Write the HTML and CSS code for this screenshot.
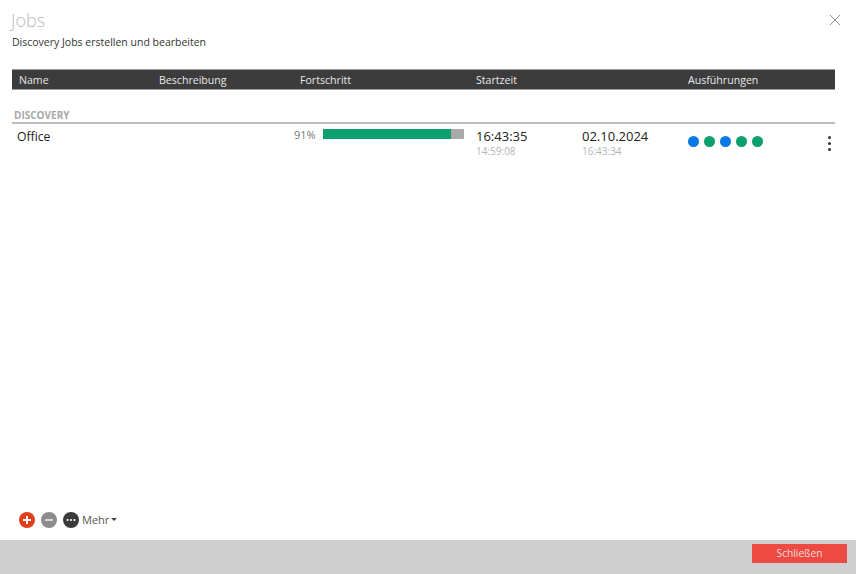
FILE: index.html
```html
<!DOCTYPE html>
<html lang="de">
<head>
<meta charset="utf-8">
<title>Jobs</title>
<link rel="stylesheet" href="styles.css">
</head>
<body>
<div class="dialog">
  <main class="content">
    <header class="head">
      <div>
        <h1 class="title">Jobs</h1>
        <p class="subtitle">Discovery Jobs erstellen und bearbeiten</p>
      </div>
      <svg class="close" width="12" height="12" viewBox="0 0 12 12"><path d="M1 1l10 10M11 1L1 11" stroke="#8f8f8f" stroke-width="1" fill="none"/></svg>
    </header>
    <div class="table-head">
      <span class="c-name">Name</span>
      <span class="c-desc">Beschreibung</span>
      <span class="c-prog">Fortschritt</span>
      <span class="c-start">Startzeit</span>
      <span class="c-runs">Ausführungen</span>
    </div>
    <div class="group">DISCOVERY</div>
    <div class="row">
      <div class="r-name">Office</div>
      <div class="r-prog">
        <span class="pct">91%</span>
        <div class="bar"><div class="bar-fill"></div></div>
      </div>
      <div class="r-time"><div class="t-main">16:43:35</div><div class="t-sub">14:59:08</div></div>
      <div class="r-date"><div class="t-main">02.10.2024</div><div class="t-sub">16:43:34</div></div>
      <div class="r-runs">
        <i class="dot blue"></i><i class="dot green"></i><i class="dot blue"></i><i class="dot green"></i><i class="dot green"></i>
      </div>
      <div class="kebab"><i></i><i></i><i></i></div>
    </div>
    <div class="actions">
      <svg class="act" width="16" height="16" viewBox="0 0 16 16"><circle cx="8" cy="8" r="8" fill="#e0401c"/><path d="M8 4v8M4 8h8" stroke="#fff" stroke-width="2"/></svg>
      <svg class="act" width="16" height="16" viewBox="0 0 16 16"><circle cx="8" cy="8" r="8" fill="#8c8c8c"/><path d="M4 8h8" stroke="#d8d8d8" stroke-width="2"/></svg>
      <svg class="act" width="16" height="16" viewBox="0 0 16 16"><circle cx="8" cy="8" r="8" fill="#3a3a3a"/><circle cx="4.6" cy="8" r="1.1" fill="#fff"/><circle cx="8" cy="8" r="1.1" fill="#fff"/><circle cx="11.4" cy="8" r="1.1" fill="#fff"/></svg>
      <span class="more">Mehr<b class="caret"></b></span>
    </div>
  </main>
  <footer class="footer">
    <button class="btn-close">Schließen</button>
  </footer>
</div>
</body>
</html>
```
FILE: styles.css
```css
* { box-sizing: border-box; }
html, body { margin: 0; height: 100%; }
body {
  background: #fff;
  color: #222;
  font-family: "Open Sans", "Noto Sans", sans-serif;
}
.dialog { display: flex; flex-direction: column; height: 574px; width: 856px; overflow: hidden; }
.content { flex: 1; display: flex; flex-direction: column; padding: 0 21px 0 12px; min-height: 0; }
.head { display: flex; justify-content: space-between; align-items: flex-start; height: 69px; }
.title { margin: 9px 0 0 -1px; font-size: 18px; line-height: 22px; font-weight: 300; color: #b9b9b9; }
.subtitle { margin: 5px 0 0; font-size: 10.5px; line-height: 13px; color: #333; }
.close { margin: 14px -6px 0 0; }
.table-head {
  display: flex; align-items: center;
  height: 21px;
  background: #3c3c3c;
  border-top: 1px solid #9a9a9a;
  border-bottom: 1px solid #9a9a9a;
  color: #e8e8e8;
  font-size: 10.6px;
}
.table-head span { display: block; }
.c-name { width: 147px; padding-left: 7px; }
.c-desc { width: 141px; }
.c-prog { width: 176px; }
.c-start { width: 212px; }
.group {
  margin-top: 18px;
  padding-left: 2px;
  height: 16px;
  border-bottom: 2px solid #bdbdbd;
  font-size: 10px; line-height: 14px; font-weight: 700; color: #a8a8a8;
}
.row { display: flex; align-items: flex-start; height: 40px; }
.r-name { width: 282px; padding: 4px 0 0 5px; font-size: 12.2px; line-height: 17px; color: #1c1c1c; }
.r-prog { width: 182px; display: flex; align-items: flex-start; padding-top: 5px; }
.pct { width: 29px; font-size: 11px; line-height: 12px; color: #777; }
.bar { width: 141px; height: 10px; background: #a9a9a9; }
.bar-fill { width: 91%; height: 100%; background: #0ba06c; }
.r-time { width: 106px; padding-top: 4px; }
.r-date { width: 106px; padding-top: 4px; }
.t-main { font-size: 13px; line-height: 17px; color: #222; }
.t-sub { font-size: 10px; line-height: 13px; color: #b5b5b5; }
.r-runs { width: 137px; display: flex; gap: 5px; padding-top: 12px; }
.dot { display: block; width: 11px; height: 11px; border-radius: 50%; }
.blue { background: #0a78e6; }
.green { background: #0ba06c; }
.kebab { display: flex; flex-direction: column; gap: 3px; padding: 12px 0 0 3px; }
.kebab i { display: block; width: 3px; height: 3px; border-radius: 50%; background: #333; }
.actions { margin-top: auto; height: 41px; padding: 0 0 0 7px; display: flex; align-items: center; gap: 6px; }
.more { display: flex; align-items: center; margin-left: -3px; font-size: 11px; color: #555; }
.caret { margin-left: 2px; width: 0; height: 0; border: 3px solid transparent; border-top-color: #444; border-bottom: 0; }
.footer { height: 34px; background: #cfcfcf; display: flex; justify-content: flex-end; align-items: flex-start; padding: 4px 9px 0 0; }
.btn-close {
  width: 95px; height: 19px; padding: 0; border: 0;
  background: #ec4a42; color: #f8dcda;
  font: 400 10.2px/19px "Open Sans", "Noto Sans", sans-serif;
}
```
